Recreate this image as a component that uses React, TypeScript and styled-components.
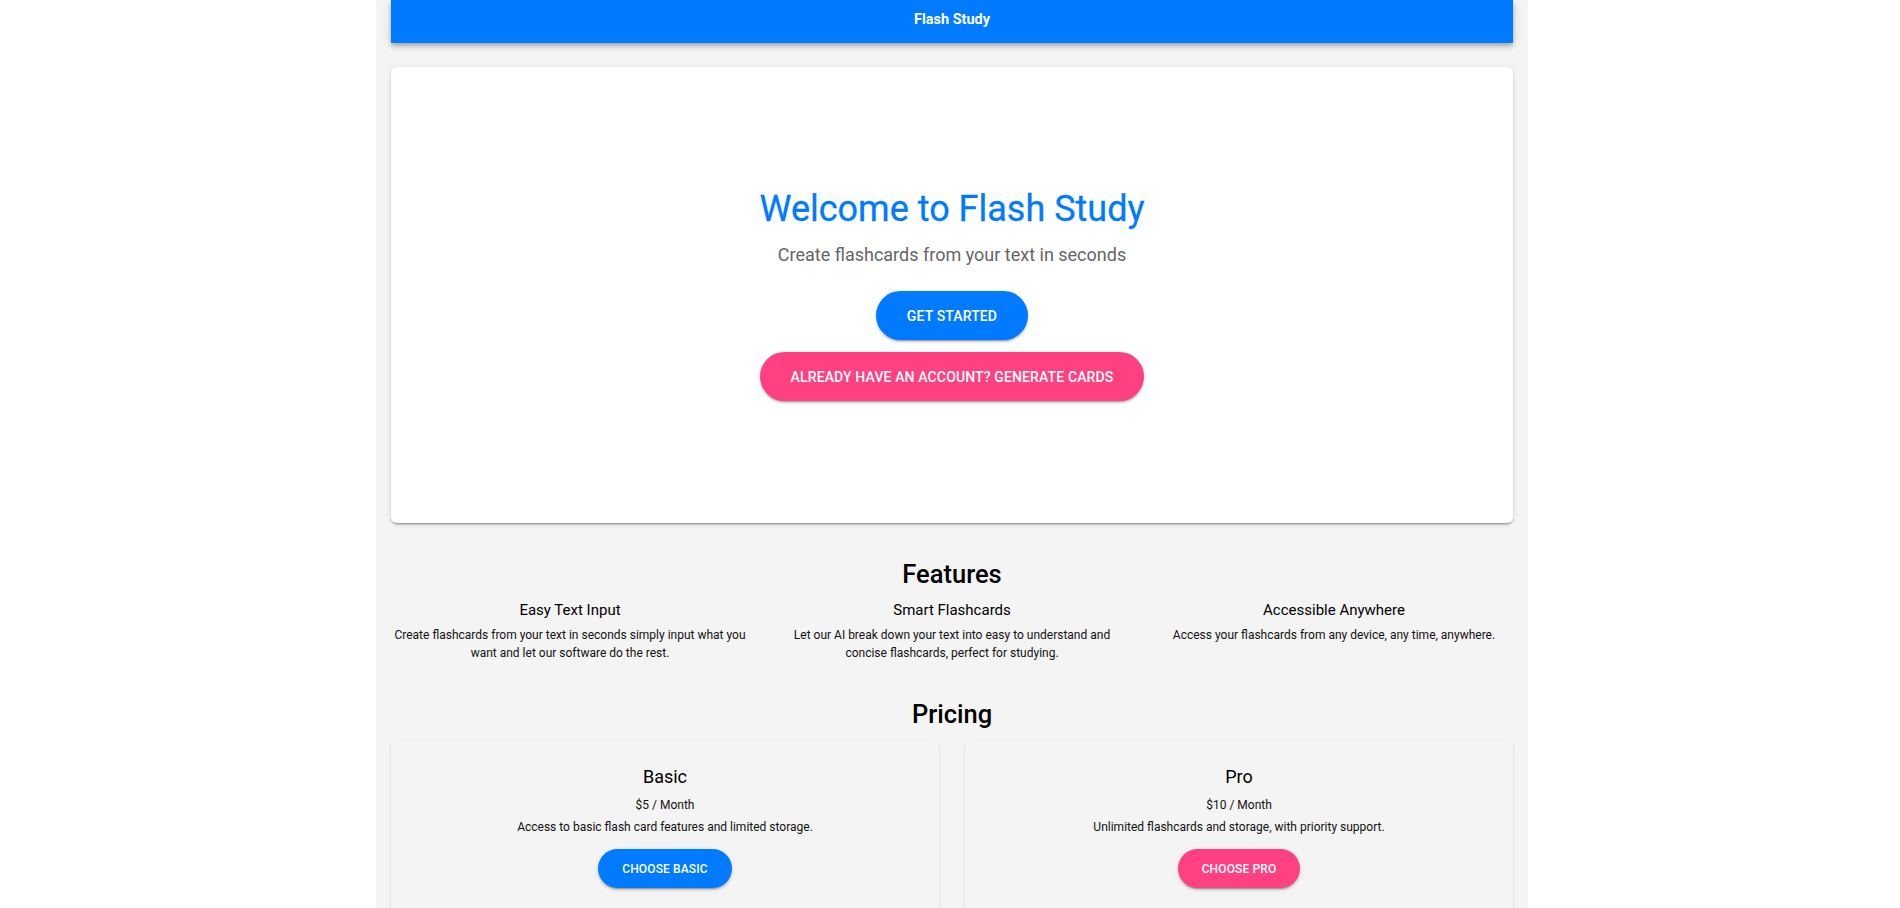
import React from "react";
import styled, { createGlobalStyle } from "styled-components";

const GlobalStyle = createGlobalStyle`
  html, body {
    margin: 0;
    padding: 0;
    background: #ffffff;
  }
  body {
    font-family: Roboto, "Liberation Sans", Arial, sans-serif;
    color: rgba(0, 0, 0, 0.87);
  }
  * { box-sizing: border-box; }
`;

const Page = styled.div`
  display: flex;
  justify-content: center;
  padding-left: 4px;
`;

const Shell = styled.div`
  width: 1152px;
  min-height: 100vh;
  background: #f4f4f4;
  padding: 0 15px 40px;
  display: flex;
  flex-direction: column;
`;

const TopBar = styled.header`
  height: 43px;
  background: #007bff;
  display: flex;
  align-items: center;
  justify-content: center;
  padding-bottom: 3px;
  box-shadow: 0px 2px 4px -1px rgba(0, 0, 0, 0.2), 0px 4px 5px 0px rgba(0, 0, 0, 0.14),
    0px 1px 10px 0px rgba(0, 0, 0, 0.12);
`;

const Brand = styled.div`
  color: #ffffff;
  font-weight: 700;
  font-size: 14.5px;
  line-height: 1.2;
`;

const Hero = styled.section`
  margin-top: 24px;
  height: 456px;
  background: #ffffff;
  border-radius: 6px;
  box-shadow: 0px 3px 1px -2px rgba(0, 0, 0, 0.2), 0px 2px 2px 0px rgba(0, 0, 0, 0.14),
    0px 1px 5px 0px rgba(0, 0, 0, 0.12);
  display: flex;
  flex-direction: column;
  align-items: center;
  justify-content: center;
  padding-bottom: 1px;
`;

const HeroTitle = styled.h1`
  margin: 0;
  font-size: 36px;
  font-weight: 400;
  line-height: 1.2;
  color: #007bff;
  -webkit-text-stroke: 0.3px #007bff;
`;

const HeroSubtitle = styled.p`
  margin: 10px 0 0;
  font-size: 18px;
  line-height: 1.5;
  color: #666666;
`;

const ButtonStack = styled.div`
  margin-top: 23px;
  display: flex;
  flex-direction: column;
  align-items: center;
  gap: 12px;
`;

const PillButton = styled.button<{ $tone: "blue" | "pink"; $size?: "lg" | "sm" }>`
  border: none;
  cursor: pointer;
  font-family: Roboto, "Liberation Sans", Arial, sans-serif;
  font-weight: 500;
  text-transform: uppercase;
  letter-spacing: 0.13px;
  color: #ffffff;
  border-radius: 999px;
  background: ${(p) => (p.$tone === "blue" ? "#007bff" : "#ff4081")};
  height: ${(p) => (p.$size === "sm" ? "39px" : "49px")};
  padding: ${(p) => (p.$size === "sm" ? "0 24px" : "0 31px")};
  font-size: ${(p) => (p.$size === "sm" ? "12px" : "14px")};
  line-height: 1;
  box-shadow: 0px 3px 1px -2px rgba(0, 0, 0, 0.2), 0px 2px 2px 0px rgba(0, 0, 0, 0.14),
    0px 1px 5px 0px rgba(0, 0, 0, 0.12);
`;

const SectionTitle = styled.h2<{ $gap: number }>`
  margin: ${(p) => p.$gap}px 0 0;
  text-align: center;
  font-size: 25.5px;
  font-weight: 500;
  line-height: 1.2;
  color: #000000;
`;

const FeatureGrid = styled.div`
  margin: 9px -12px 0;
  display: grid;
  grid-template-columns: repeat(3, 1fr);
`;

const Feature = styled.div`
  padding: 0 13px;
  text-align: center;
`;

const FeatureTitle = styled.h3`
  margin: 0;
  font-size: 15px;
  font-weight: 400;
  line-height: 1.5;
  color: #000000;
`;

const FeatureText = styled.p`
  margin: 5px 0 0;
  font-size: 12px;
  line-height: 18.3px;
  color: #111111;
`;

const PlanGrid = styled.div`
  margin-top: 11px;
  display: grid;
  grid-template-columns: 1fr 1fr;
  gap: 26px;
`;

const PlanCard = styled.div`
  background: #f4f4f4;
  border-radius: 6px;
  padding: 23px 16px 24px;
  min-height: 200px;
  text-align: center;
  display: flex;
  flex-direction: column;
  align-items: center;
  box-shadow: 0px 2px 1px -1px rgba(0, 0, 0, 0.2), 0px 1px 1px 0px rgba(0, 0, 0, 0.14),
    0px 1px 3px 0px rgba(0, 0, 0, 0.12);
`;

const PlanName = styled.h3`
  margin: 0;
  font-size: 18px;
  font-weight: 400;
  line-height: 1.5;
  color: #000000;
`;

const PlanPrice = styled.div`
  margin-top: 6px;
  font-size: 12px;
  line-height: 18px;
  color: #111111;
`;

const PlanText = styled.p`
  margin: 4px 0 13px;
  font-size: 12px;
  line-height: 18px;
  color: #111111;
`;

const features = [
  {
    title: "Easy Text Input",
    text: "Create flashcards from your text in seconds simply input what you want and let our software do the rest.",
  },
  {
    title: "Smart Flashcards",
    text: "Let our AI break down your text into easy to understand and concise flashcards, perfect for studying.",
  },
  {
    title: "Accessible Anywhere",
    text: "Access your flashcards from any device, any time, anywhere.",
  },
];

const plans: { name: string; price: string; text: string; cta: string; tone: "blue" | "pink" }[] = [
  {
    name: "Basic",
    price: "$5 / Month",
    text: "Access to basic flash card features and limited storage.",
    cta: "Choose Basic",
    tone: "blue",
  },
  {
    name: "Pro",
    price: "$10 / Month",
    text: "Unlimited flashcards and storage, with priority support.",
    cta: "Choose Pro",
    tone: "pink",
  },
];

export default function App() {
  return (
    <>
      <GlobalStyle />
      <Page>
        <Shell>
          <TopBar>
            <Brand>Flash Study</Brand>
          </TopBar>

          <Hero>
            <HeroTitle>Welcome to Flash Study</HeroTitle>
            <HeroSubtitle>Create flashcards from your text in seconds</HeroSubtitle>
            <ButtonStack>
              <PillButton $tone="blue">Get Started</PillButton>
              <PillButton $tone="pink">Already have an account? Generate Cards</PillButton>
            </ButtonStack>
          </Hero>

          <SectionTitle $gap={36}>Features</SectionTitle>
          <FeatureGrid>
            {features.map((f) => (
              <Feature key={f.title}>
                <FeatureTitle>{f.title}</FeatureTitle>
                <FeatureText>{f.text}</FeatureText>
              </Feature>
            ))}
          </FeatureGrid>

          <SectionTitle $gap={36}>Pricing</SectionTitle>
          <PlanGrid>
            {plans.map((p) => (
              <PlanCard key={p.name}>
                <PlanName>{p.name}</PlanName>
                <PlanPrice>{p.price}</PlanPrice>
                <PlanText>{p.text}</PlanText>
                <PillButton $tone={p.tone} $size="sm">
                  {p.cta}
                </PillButton>
              </PlanCard>
            ))}
          </PlanGrid>
        </Shell>
      </Page>
    </>
  );
}
